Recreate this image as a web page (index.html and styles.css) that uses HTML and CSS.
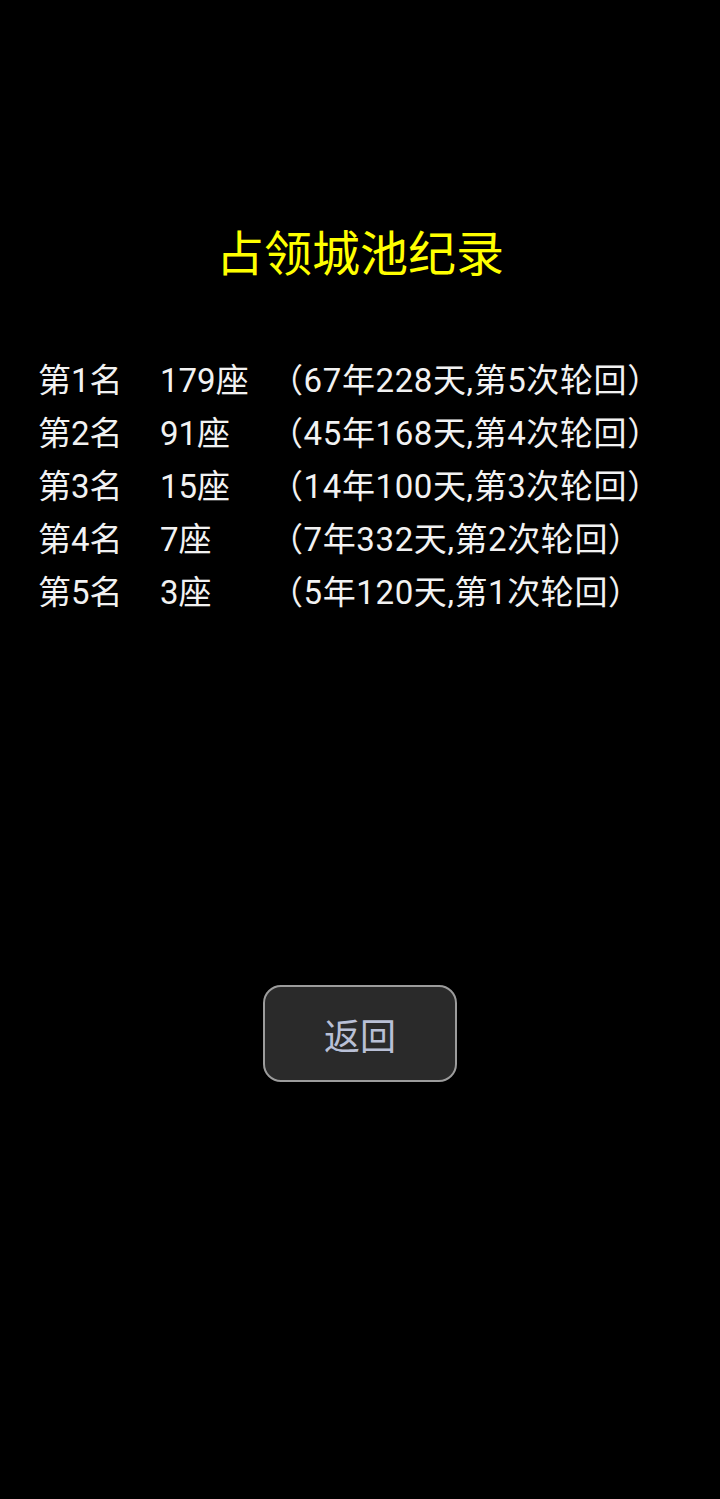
FILE: index.html
```html
<!DOCTYPE html>
<html lang="zh-CN">
<head>
<meta charset="utf-8">
<link rel="stylesheet" href="styles.css">
</head>
<body>
<div class="page">
  <h1 class="title">占领城池纪录</h1>
  <div class="records">
    <div class="row"><span class="rank">第1名</span><span class="count">179座</span><span class="detail">（67年228天,第5次轮回）</span></div>
    <div class="row"><span class="rank">第2名</span><span class="count">91座</span><span class="detail">（45年168天,第4次轮回）</span></div>
    <div class="row"><span class="rank">第3名</span><span class="count">15座</span><span class="detail">（14年100天,第3次轮回）</span></div>
    <div class="row"><span class="rank">第4名</span><span class="count">7座</span><span class="detail">（7年332天,第2次轮回）</span></div>
    <div class="row"><span class="rank">第5名</span><span class="count">3座</span><span class="detail">（5年120天,第1次轮回）</span></div>
  </div>
  <div class="actions">
    <button class="back">返回</button>
  </div>
</div>
</body>
</html>
```
FILE: styles.css
```css
html, body {
  margin: 0;
  padding: 0;
  background: #000;
}
body {
  width: 720px;
  height: 1499px;
  font-family: Roboto, "Noto Sans CJK SC", sans-serif;
  color: #f2f2f2;
}
.page {
  display: flex;
  flex-direction: column;
  align-items: stretch;
}
.title {
  margin: 227px 0 0 0;
  font-size: 48px;
  line-height: 56px;
  font-weight: 400;
  color: #ffff00;
  text-align: center;
}
.records {
  margin-top: 71px;
  padding-left: 38px;
}
.row {
  display: grid;
  grid-template-columns: 122px 110px auto;
  font-size: 33px;
  line-height: 53px;
  white-space: nowrap;
}
.detail {
  letter-spacing: 0.6px;
}
.actions {
  margin-top: 366px;
  display: flex;
  justify-content: center;
}
.back {
  width: 194px;
  height: 97px;
  background: #2a2a2a;
  border: 2px solid #9c9c9c;
  border-radius: 18px;
  color: #b9c0d6;
  font-family: Roboto, "Noto Sans CJK SC", sans-serif;
  font-size: 36px;
  padding: 0;
}
```
